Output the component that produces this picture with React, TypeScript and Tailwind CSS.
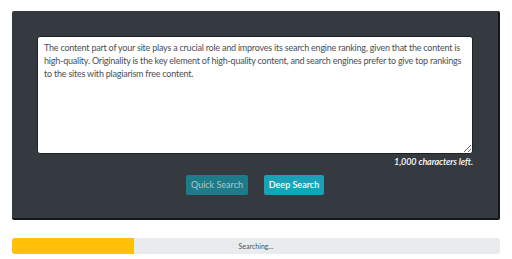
import React from 'react';

const SAMPLE =
  'The content part of your site plays a crucial role and improves its search engine ranking, given that the content is high-quality. Originality is the key element of high-quality content, and search engines prefer to give top rankings to the sites with plagiarism free content.';

export default function App() {
  return (
    <div className="w-[512px] h-[259px] bg-white pt-[11px] px-[12px] font-['Lato',sans-serif]">
      <div className="bg-[#343a40] rounded-[2px] border-r-2 border-b-2 border-[#15181b] px-[25px] pt-[25px] pb-[23px]">
        <textarea
          readOnly
          defaultValue={SAMPLE}
          className="block w-full h-[118px] bg-white border border-[#1d2124] rounded-[3px] pl-[6px] pr-[4px] py-[4px] text-[9px] leading-[13px] tracking-[-0.22px] text-[#495057] outline-none"
        />
        <div className="mt-[2px] text-right text-[9px] leading-[12px] tracking-[-0.1px] italic font-semibold text-white">
          1,000 characters left.
        </div>
        <div className="mt-[7px] flex justify-center gap-4">
          <button className="w-[62px] h-[20px] rounded-[2px] bg-[#1e7b8a] text-[9px] text-[#a9c7cc]">
            Quick Search
          </button>
          <button className="w-[60px] h-[20px] rounded-[2px] bg-[#17a2b8] text-[9px] font-semibold text-white">
            Deep Search
          </button>
        </div>
      </div>
      <div className="relative mt-[18px] h-[16px] rounded-[3px] bg-[#e9ecef] overflow-hidden">
        <div className="h-full w-[25%] bg-[#ffc107]" />
        <span className="absolute inset-0 flex items-center justify-center text-[7px] text-[#495057]">
          Searching...
        </span>
      </div>
    </div>
  );
}
